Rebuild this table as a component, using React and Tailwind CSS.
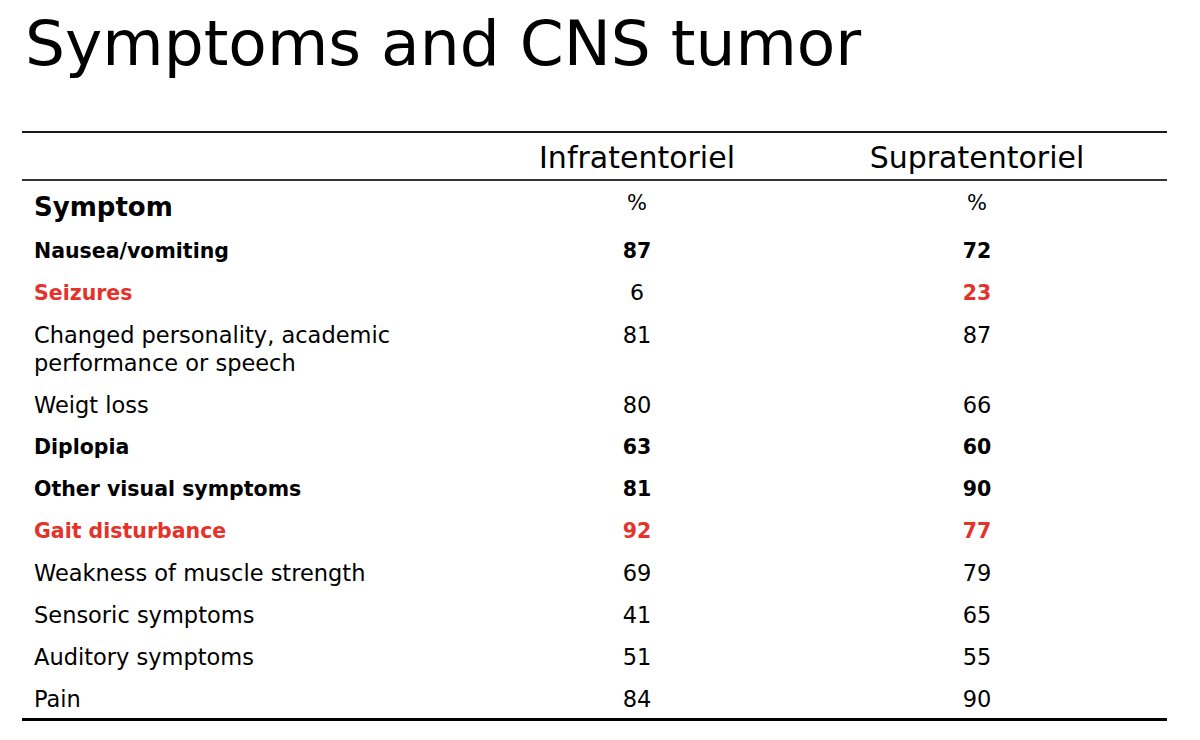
const ROWS = [
  { label: 'Nausea/vomiting', infra: '87', supra: '72', bold: true },
  { label: 'Seizures', infra: '6', supra: '23', bold: true, red: true, infraPlain: true },
  { label: 'Changed personality, academic\nperformance or speech', infra: '81', supra: '87' },
  { label: 'Weigt loss', infra: '80', supra: '66' },
  { label: 'Diplopia', infra: '63', supra: '60', bold: true },
  { label: 'Other visual symptoms', infra: '81', supra: '90', bold: true },
  { label: 'Gait disturbance', infra: '92', supra: '77', bold: true, red: true },
  { label: 'Weakness of muscle strength', infra: '69', supra: '79' },
  { label: 'Sensoric symptoms', infra: '41', supra: '65' },
  { label: 'Auditory symptoms', infra: '51', supra: '55' },
  { label: 'Pain', infra: '84', supra: '90' },
];

const font = { fontFamily: '"Comic Sans MS", "DejaVu Sans", "Noto Sans", sans-serif' };

function Row({ row }) {
  const base = row.bold ? 'font-bold text-[20.5px]' : 'font-normal text-[22.5px]';
  const colour = row.red ? 'text-[#e5322b]' : 'text-black';
  const infraCls = row.infraPlain ? 'font-normal text-[22px] text-black' : `${base} ${colour}`;
  return (
    <div className="grid grid-cols-[445px_340px_340px] pt-[9px] pb-[5px] leading-[28px]">
      <div className={`pl-3 whitespace-pre-line ${base} ${colour}`}>{row.label}</div>
      <div className={`text-center ${infraCls}`}>{row.infra}</div>
      <div className={`text-center ${base} ${colour}`}>{row.supra}</div>
    </div>
  );
}

export default function App() {
  return (
    <div className="w-[1200px] h-[740px] bg-white overflow-hidden" style={font}>
      <h1 className="pl-[25px] pt-[4px] text-[63px] leading-[80px] text-black font-normal">
        Symptoms and CNS tumor
      </h1>

      <div className="ml-[22px] mr-[33px] mt-[47px] border-t-2 border-[#1a1a1a]">
        {/* column headers */}
        <div className="grid grid-cols-[445px_340px_340px] h-[48px] items-center text-[30px] text-black border-b-2 border-[#333]">
          <div />
          <div className="text-center pt-[2px]">Infratentoriel</div>
          <div className="text-center pt-[2px]">Supratentoriel</div>
        </div>

        <div className="grid grid-cols-[445px_340px_340px] h-[47px] text-black">
          <div className="pl-3 pt-[10px] text-[26px] font-bold leading-[32px]">Symptom</div>
          <div className="text-center pt-[8px] text-[21px] leading-[28px]">%</div>
          <div className="text-center pt-[8px] text-[21px] leading-[28px]">%</div>
        </div>

        <div className="border-b-[3px] border-black">
          {ROWS.map((r) => (
            <Row key={r.label} row={r} />
          ))}
        </div>
      </div>
    </div>
  );
}
